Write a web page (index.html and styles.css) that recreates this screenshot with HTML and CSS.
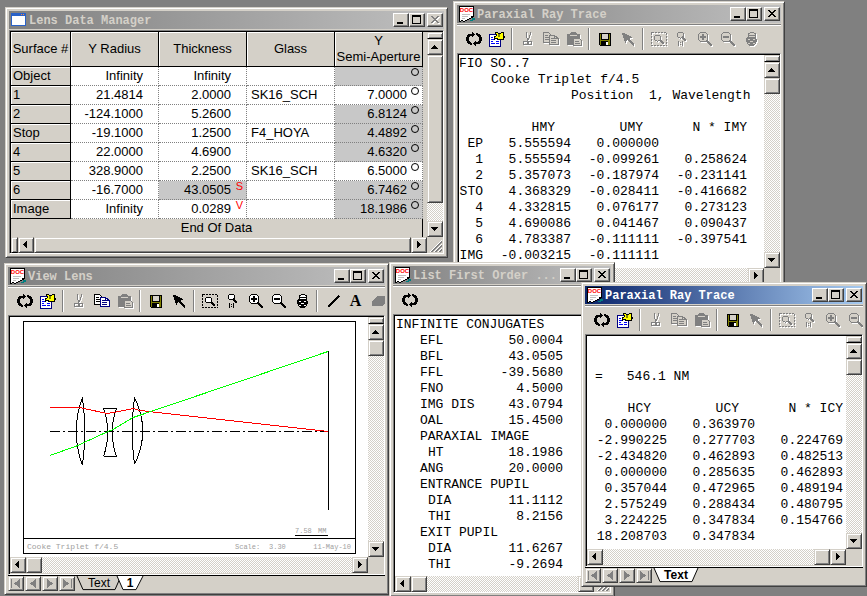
FILE: index.html
```html
<!DOCTYPE html>
<html lang="en">
<head>
<meta charset="utf-8">
<title>Lens Data Manager</title>
<link rel="stylesheet" href="styles.css">
</head>
<body>
<svg class="defs" aria-hidden="true">
  <symbol id="doc" viewBox="0 0 16 16"><path d="M0 0H15V11H14V12H12V13H10V14H8V15H6V16H4V15H2V16H0Z" fill="#000"/><path d="M1 1H14V10H12V12H10V13H8V14H6V15H4V14H2V15H1Z" fill="#fff"/><path d="M13 12h3v2h-2v1h-3v-1h2Z" fill="#008080"/><path d="M3 8.500h8M3 10.500h6M3 12.500h3" stroke="#c0c0c0"/><text x="7.500" y="6" text-anchor="middle" class="doc-label">DOC</text></symbol>
  <symbol id="app" viewBox="0 0 16 16"><path d="M0 1h15v13H0Z" fill="#2a62c8"/><path d="M1 4h13v9H1Z" fill="#fff"/><path d="M10 2h1v1h-1Zm2 0h1v1h-1Z" fill="#f84"/></symbol>
  <symbol id="refresh" viewBox="0 0 16 16"><path id="half" d="M4 3H6V1h1v1h1v1h1v1H8v1H7v1H6V5H4v1H3v4h1v1h1v1h1v2H4v-1H2v-1H1v-2H0V6h1V4h1V3Z" fill="currentColor"/><path d="M4 3H6V1h1v1h1v1h1v1H8v1H7v1H6V5H4v1H3v4h1v1h1v1h1v2H4v-1H2v-1H1v-2H0V6h1V4h1V3Z" transform="rotate(180 8 8)" fill="currentColor"/></symbol>
  <symbol id="props" viewBox="0 0 16 16"><path d="M.5 3.500h11v12H.5Z" fill="#fff" stroke="#000080"/><path d="M2 6.500h2M2 8.500h4M2 10.500h2M2 12.500h4M7 10.500h3M7 12.500h3" stroke="#00f"/><path d="M6 1h2l1 1h3l1-1h2l-1 2v2l2 1-2 1v1h-2l-1 1-1-1-2 1V7H7l-1 1H5V6l2-1V3Z" fill="#ff0" stroke="#000"/><path d="M9 3h2v3H9Z" fill="#808000"/></symbol>
  <symbol id="cut" viewBox="0 0 16 16"><g fill="none" stroke="currentColor"><path d="M6 1v3l1 3 1 3M10 1v3L9 7l-2 3"/><circle cx="5.500" cy="12" r="2"/><circle cx="10" cy="12" r="2"/></g></symbol>
  <symbol id="copy" viewBox="0 0 16 16"><g fill="var(--paper)"><path d="M.5 1.500h5l3 3v7h-8Z" stroke="var(--ink)"/><path d="M6.500 4.500h5l4 3v6h-9Z" stroke="var(--navy)"/></g><path d="M2 4.500h3M2 6.500h4M2 8.500h4" stroke="var(--ink)"/><path d="M8 7.500h3M8 9.500h5M8 11.500h5M11.500 5v2.500h4" fill="none" stroke="var(--navy)"/></symbol>
  <symbol id="paste" viewBox="0 0 16 16"><path d="M1 3h3l1-2h5l1 2h3v11H1Z" fill="currentColor"/><path d="M4 4.500h7" stroke="#d4d0c8"/><path d="M7.500 7.500h6l2 2v5h-8Z" fill="#d4d0c8" stroke="currentColor"/><path d="M9 10.500h4M9 12.500h5" stroke="currentColor"/></symbol>
  <symbol id="save" viewBox="0 0 16 16"><path d="M2 2h12v13H3l-1-1Z" fill="#000"/><path d="M3 3h1v6h8V3h1v11h-2v-4H4v4H3Z" fill="#808000"/><path d="M5 3h6v5H5Z" fill="#d4d0c8"/><path d="M9 11h2v3H9Z" fill="#fff"/></symbol>
  <symbol id="arrow" viewBox="0 0 16 16"><path d="M2 2h2l8 4v1h-2l-1 1 5 5v2h-1L7 9 6 10v2H5Z" fill="currentColor"/></symbol>
  <symbol id="zoombox" viewBox="0 0 16 16"><path d="M.5 1.500h15v13H.5Z" fill="none" stroke="currentColor" stroke-dasharray="2 1"/><circle cx="6.500" cy="7" r="3" fill="var(--paper)" stroke="currentColor"/><path d="M9 9l4 4" stroke="currentColor" stroke-width="2"/></symbol>
  <symbol id="zoomone" viewBox="0 0 16 16"><circle cx="6.500" cy="4" r="3" fill="var(--paper)" stroke="currentColor"/><path d="M8 6l4 4" stroke="currentColor" stroke-width="2"/><path d="M4.500 10v5M8.500 10v5M6 11.500h1M6 13.500h1" stroke="currentColor"/></symbol>
  <symbol id="zoomin" viewBox="0 0 16 16"><circle cx="6" cy="6" r="5" fill="var(--paper)" stroke="currentColor"/><path d="M6 3v6M3 6h6" stroke="currentColor" stroke-width="2"/><path d="M10 10l5 5" stroke="currentColor" stroke-width="2"/></symbol>
  <symbol id="zoomout" viewBox="0 0 16 16"><circle cx="6" cy="6" r="5" fill="var(--paper)" stroke="currentColor"/><path d="M3 6h6M10 10l5 5" stroke="currentColor" stroke-width="2"/></symbol>
  <symbol id="lock" viewBox="0 0 16 16"><path d="M5.500 7V3l2-1.500h3l2 1.500v4" fill="var(--paper)" stroke="currentColor"/><path d="M6 4.500h6" stroke="currentColor"/><path d="M4 6h9l1 3-1 4-3 2H7l-3-2-1-4Z" fill="currentColor"/><path d="M5 8h2v1H5Zm5 0h2v1h-2ZM7 10h3v1H7ZM5 12h2v1H5Zm5 0h2v1h-2Z" fill="var(--paper)"/></symbol>
  <symbol id="line" viewBox="0 0 16 16"><path d="M3 14L14 3" stroke="currentColor" stroke-width="2"/></symbol>
  <symbol id="eraser" viewBox="0 0 16 16"><path d="M6 3h10v5l-5 5H1V9Z" fill="currentColor"/></symbol>
  <symbol id="min" viewBox="0 0 12 10"><path d="M2 7h6v2H2Z" fill="currentColor"/></symbol>
  <symbol id="max" viewBox="0 0 12 10"><path d="M1 0h9v9H1ZM2 2v6h7V2Z" fill="currentColor" fill-rule="evenodd"/></symbol>
  <symbol id="close" viewBox="0 0 12 10"><path d="M2 1h2v1h1v1h2V2h1V1h2v1H9v1H8v1H7v1h1v1h1v1h1v1H8V7H7V6H5v1H4v1H2V7h1V6h1V5h1V4H4V3H3V2H2Z" fill="currentColor"/></symbol>
  <symbol id="up" viewBox="0 0 12 12"><path d="M5 4h1v1h1v1h1v1h1v1H2V7h1V6h1V5h1Z" fill="#000"/></symbol>
  <symbol id="down" viewBox="0 0 12 12"><path d="M2 4h7v1H8v1H7v1H6v1H5V7H4V6H3V5H2Z" fill="#000"/></symbol>
  <symbol id="left" viewBox="0 0 12 12"><path d="M7 2v7H6V8H5V7H4V6H3V5h1V4h1V3h1V2Z" fill="#000"/></symbol>
  <symbol id="right" viewBox="0 0 12 12"><path d="M4 2v7h1V8h1V7h1V6h1V5H7V4H6V3H5V2Z" fill="#000"/></symbol>
  <symbol id="first" viewBox="0 0 14 14"><path d="M2 2h1v10H2ZM11 2v10L5 7Z" fill="#808080"/></symbol>
  <symbol id="prev" viewBox="0 0 14 14"><path d="M10 2v10L4 7Z" fill="#808080"/></symbol>
  <symbol id="next" viewBox="0 0 14 14"><path d="M4 2v10l6-5Z" fill="#808080"/></symbol>
  <symbol id="last" viewBox="0 0 14 14"><path d="M11 2h1v10h-1ZM3 2v10l6-5Z" fill="#808080"/></symbol>
  <symbol id="grip" viewBox="0 0 16 16"><path d="M3 15L15 3M7 15l8-8M11 15l4-4" stroke="#fff"/><path d="M4 15L15 4M5 15L15 5M8 15l7-7M9 15l6-6M12 15l3-3M13 15l2-2" stroke="#808080"/></symbol>
</svg>

<main class="desktop">

<section class="window ray-back" aria-label="Paraxial Ray Trace, position 1">
  <header class="title"><svg class="ticon"><use href="#doc"/></svg><h2>Paraxial Ray Trace</h2>
    <button class="cap" aria-label="Minimize"><svg><use href="#min"/></svg></button><button class="cap" aria-label="Maximize"><svg><use href="#max"/></svg></button><button class="cap close" aria-label="Close"><svg><use href="#close"/></svg></button></header>
  <div class="toolbar">
    <button class="tool" aria-label="Refresh"><svg><use href="#refresh"/></svg></button><button class="tool" aria-label="Properties"><svg><use href="#props"/></svg></button><i class="sep"></i>
    <button class="tool" disabled aria-label="Cut"><svg><use href="#cut"/></svg></button><button class="tool" disabled aria-label="Copy"><svg><use href="#copy"/></svg></button><button class="tool" disabled aria-label="Paste"><svg><use href="#paste"/></svg></button><i class="sep"></i>
    <button class="tool" aria-label="Save"><svg><use href="#save"/></svg></button><button class="tool" disabled aria-label="Select"><svg><use href="#arrow"/></svg></button><i class="sep"></i>
    <button class="tool" disabled aria-label="Zoom area"><svg><use href="#zoombox"/></svg></button><button class="tool" disabled aria-label="Actual size"><svg><use href="#zoomone"/></svg></button><button class="tool" disabled aria-label="Zoom in"><svg><use href="#zoomin"/></svg></button><button class="tool" disabled aria-label="Zoom out"><svg><use href="#zoomout"/></svg></button><button class="tool" disabled aria-label="Lock"><svg><use href="#lock"/></svg></button>
  </div>
  <div class="pane">
    <div class="view mono">
      <p>FIO SO..7</p>
      <p class="in-4">Cooke Triplet f/4.5</p>
      <p class="in-14">Position&nbsp; 1, Wavelength</p>
      <table class="trace gap-top">
        <colgroup><col class="c-id"><col class="c-num"><col class="c-num"><col class="c-num"></colgroup>
        <tr><th></th><th class="mid">HMY</th><th class="mid">UMY</th><th>N * IMY</th></tr>
        <tr><td>EP</td><td>5.555594</td><td>0.000000</td><td></td></tr>
        <tr><td>1</td><td>5.555594</td><td>-0.099261</td><td>0.258624</td></tr>
        <tr><td>2</td><td>5.357073</td><td>-0.187974</td><td>-0.231141</td></tr>
        <tr><td>STO</td><td>4.368329</td><td>-0.028411</td><td>-0.416682</td></tr>
        <tr><td>4</td><td>4.332815</td><td>0.076177</td><td>0.273123</td></tr>
        <tr><td>5</td><td>4.690086</td><td>0.041467</td><td>0.090437</td></tr>
        <tr><td>6</td><td>4.783387</td><td>-0.111111</td><td>-0.397541</td></tr>
        <tr><td>IMG</td><td>-0.003215</td><td>-0.111111</td><td></td></tr>
      </table>
    </div>
    <div class="vscroll"><i class="split"></i><button class="arr" aria-label="Up"><svg><use href="#up"/></svg></button><i class="thumb"></i><i class="track"></i><button class="arr" aria-label="Down"><svg><use href="#down"/></svg></button></div>
    <div class="hscroll"><button class="arr" aria-label="Left"><svg><use href="#left"/></svg></button><i class="thumb"></i><i class="track"></i><button class="arr" aria-label="Right"><svg><use href="#right"/></svg></button></div>
  </div>
</section>

<section class="window data" aria-label="Lens Data Manager">
  <header class="title"><svg class="ticon"><use href="#app"/></svg><h2>Lens Data Manager</h2>
    <button class="cap" aria-label="Minimize"><svg><use href="#min"/></svg></button><button class="cap" aria-label="Maximize"><svg><use href="#max"/></svg></button><button class="cap close" disabled aria-label="Close"><svg><use href="#close"/></svg></button></header>
  <div class="pane">
    <div class="sheet-area">
      <table class="sheet">
        <colgroup><col class="s-id"><col><col><col><col></colgroup>
        <thead><tr><th>Surface #</th><th>Y Radius</th><th>Thickness</th><th>Glass</th><th>Y<br>Semi-Aperture</th></tr></thead>
        <tbody>
        <tr><th>Object</th><td>Infinity</td><td>Infinity</td><td></td><td class="shade"><b class="ring"></b></td></tr>
        <tr><th>1</th><td>21.4814</td><td>2.0000</td><td>SK16_SCH</td><td>7.0000<b class="ring"></b></td></tr>
        <tr><th>2</th><td>-124.1000</td><td>5.2600</td><td></td><td class="shade">6.8124<b class="ring"></b></td></tr>
        <tr><th>Stop</th><td>-19.1000</td><td>1.2500</td><td>F4_HOYA</td><td class="shade">4.4892<b class="ring"></b></td></tr>
        <tr><th>4</th><td>22.0000</td><td>4.6900</td><td></td><td class="shade">4.6320<b class="ring"></b></td></tr>
        <tr><th>5</th><td>328.9000</td><td>2.2500</td><td>SK16_SCH</td><td>6.5000<b class="ring"></b></td></tr>
        <tr><th>6</th><td>-16.7000</td><td class="shade">43.0505<b class="mark">S</b></td><td></td><td class="shade">6.7462<b class="ring"></b></td></tr>
        <tr><th>Image</th><td>Infinity</td><td>0.0289<b class="mark">V</b></td><td></td><td class="shade">18.1986<b class="ring"></b></td></tr>
        </tbody>
      </table>
      <p class="end">End Of Data</p>
    </div>
    <div class="vscroll"><i class="split"></i><button class="arr" aria-label="Up"><svg><use href="#up"/></svg></button><i class="thumb long"></i><i class="track"></i><button class="arr" aria-label="Down"><svg><use href="#down"/></svg></button></div>
    <div class="hscroll"><i class="split"></i><button class="arr" aria-label="Left"><svg><use href="#left"/></svg></button><i class="thumb full"></i><button class="arr" aria-label="Right"><svg><use href="#right"/></svg></button></div>
    <svg class="grip"><use href="#grip"/></svg>
  </div>
</section>

<section class="window lens" aria-label="View Lens">
  <header class="title"><svg class="ticon"><use href="#doc"/></svg><h2>View Lens</h2>
    <button class="cap" aria-label="Minimize"><svg><use href="#min"/></svg></button><button class="cap" aria-label="Maximize"><svg><use href="#max"/></svg></button><button class="cap close" aria-label="Close"><svg><use href="#close"/></svg></button></header>
  <div class="toolbar">
    <button class="tool" aria-label="Refresh"><svg><use href="#refresh"/></svg></button><button class="tool" aria-label="Properties"><svg><use href="#props"/></svg></button><i class="sep"></i>
    <button class="tool" disabled aria-label="Cut"><svg><use href="#cut"/></svg></button><button class="tool" aria-label="Copy"><svg><use href="#copy"/></svg></button><button class="tool" disabled aria-label="Paste"><svg><use href="#paste"/></svg></button><i class="sep"></i>
    <button class="tool" aria-label="Save"><svg><use href="#save"/></svg></button><button class="tool" aria-label="Select"><svg><use href="#arrow"/></svg></button><i class="sep"></i>
    <button class="tool" aria-label="Zoom area"><svg><use href="#zoombox"/></svg></button><button class="tool" aria-label="Actual size"><svg><use href="#zoomone"/></svg></button><button class="tool" aria-label="Zoom in"><svg><use href="#zoomin"/></svg></button><button class="tool" aria-label="Zoom out"><svg><use href="#zoomout"/></svg></button><button class="tool" aria-label="Lock"><svg><use href="#lock"/></svg></button><i class="sep"></i>
    <button class="tool" aria-label="Line"><svg><use href="#line"/></svg></button><button class="tool letter">A</button><button class="tool eraser" aria-label="Erase"><svg><use href="#eraser"/></svg></button>
  </div>
  <div class="pane">
    <div class="view">
      <svg class="drawing" viewBox="10 317 358 240" role="img" aria-label="Cooke triplet layout">
        <g fill="none" stroke="#000" shape-rendering="crispEdges">
          <path d="M23.500 321.500h332v232h-332ZM23 538.500h332M328.500 351v159M295 535.500h33"/>
          <path d="M50 431.500H328" stroke-dasharray="10 3 2 3"/>
          <path d="M82.500 397.500Q70 431 82.500 465.500M82.500 397.500Q87 431 82.500 465.500"/>
          <path d="M103.500 408.500h13M103.500 456.500h13M103.500 408.500Q112 432 103.500 456.500M116.500 408.500Q108 432 116.500 456.500"/>
          <path d="M134.500 397.500Q130 431 134.500 464.500M134.500 397.500Q151 431 134.500 464.500"/>
          <path stroke="#f00" d="M50 407.500H80L84 408.500 107 413.500 114 412.500 133 408.500 140 410.500 328 431.500"/>
          <path stroke="#0f0" d="M50 455.500L78 445.500 84 442.500 108 431.500 113 429.500 133 417.500 142 414.500 328 351.500"/>
        </g>
        <g class="note"><text class="name" x="27" y="549">Cooke Triplet f/4.5</text><text x="235" y="549">Scale:</text><text x="269" y="549">3.30</text><text x="351" y="549" text-anchor="end">11-May-10</text><text x="295" y="533">7.58</text><text x="318" y="533">MM</text></g>
      </svg>
    </div>
    <div class="vscroll"><i class="split"></i><button class="arr" aria-label="Up"><svg><use href="#up"/></svg></button><i class="thumb"></i><i class="track"></i><button class="arr" aria-label="Down"><svg><use href="#down"/></svg></button></div>
    <div class="hscroll"><button class="arr" aria-label="Left"><svg><use href="#left"/></svg></button><i class="thumb"></i><i class="track"></i><button class="arr" aria-label="Right"><svg><use href="#right"/></svg></button></div>
  </div>
  <nav class="tabs">
    <button class="nav" aria-label="First"><svg><use href="#first"/></svg></button><button class="nav" aria-label="Previous"><svg><use href="#prev"/></svg></button><button class="nav" aria-label="Next"><svg><use href="#next"/></svg></button><button class="nav" aria-label="Last"><svg><use href="#last"/></svg></button>
    <button class="tab"><svg viewBox="0 0 44 16" preserveAspectRatio="none"><path d="M0 0L6 14.500H38L44 0" fill="#d4d0c8" stroke="#000"/></svg><span>Text</span></button><button class="tab short on"><svg viewBox="0 0 26 16" preserveAspectRatio="none"><path d="M0 0L6 14.500H19L26 0" fill="#fff" stroke="#000"/></svg><span>1</span></button>
  </nav>
</section>

<section class="window order" aria-label="List First Order">
  <header class="title"><svg class="ticon"><use href="#doc"/></svg><h2>List First Order ...</h2>
    <button class="cap" aria-label="Minimize"><svg><use href="#min"/></svg></button><button class="cap" aria-label="Maximize"><svg><use href="#max"/></svg></button><button class="cap close" aria-label="Close"><svg><use href="#close"/></svg></button></header>
  <div class="toolbar"><button class="tool" aria-label="Refresh"><svg><use href="#refresh"/></svg></button></div>
  <div class="pane">
    <div class="view mono inset">
      <table class="props">
        <tr><th colspan="2">INFINITE CONJUGATES</th></tr>
        <tr><td>EFL</td><td>50.0004</td></tr>
        <tr><td>BFL</td><td>43.0505</td></tr>
        <tr><td>FFL</td><td>-39.5680</td></tr>
        <tr><td>FNO</td><td>4.5000</td></tr>
        <tr><td>IMG DIS</td><td>43.0794</td></tr>
        <tr><td>OAL</td><td>15.4500</td></tr>
        <tr><td colspan="2">PARAXIAL IMAGE</td></tr>
        <tr class="sub"><td>HT</td><td>18.1986</td></tr>
        <tr><td>ANG</td><td>20.0000</td></tr>
        <tr><td colspan="2">ENTRANCE PUPIL</td></tr>
        <tr class="sub"><td>DIA</td><td>11.1112</td></tr>
        <tr class="sub"><td>THI</td><td>8.2156</td></tr>
        <tr><td colspan="2">EXIT PUPIL</td></tr>
        <tr class="sub"><td>DIA</td><td>11.6267</td></tr>
        <tr class="sub"><td>THI</td><td>-9.2694</td></tr>
      </table>
    </div>
    <div class="vscroll"><i class="split"></i><button class="arr" aria-label="Up"><svg><use href="#up"/></svg></button><i class="thumb"></i><i class="track"></i><button class="arr" aria-label="Down"><svg><use href="#down"/></svg></button></div>
    <div class="hscroll"><button class="arr" aria-label="Left"><svg><use href="#left"/></svg></button><i class="thumb"></i><i class="track"></i><button class="arr" aria-label="Right"><svg><use href="#right"/></svg></button></div>
    <svg class="grip"><use href="#grip"/></svg>
  </div>
</section>

<section class="window ray-front active" aria-label="Paraxial Ray Trace, wavelength">
  <header class="title"><svg class="ticon"><use href="#doc"/></svg><h2>Paraxial Ray Trace</h2>
    <button class="cap" aria-label="Minimize"><svg><use href="#min"/></svg></button><button class="cap" aria-label="Maximize"><svg><use href="#max"/></svg></button><button class="cap close" aria-label="Close"><svg><use href="#close"/></svg></button></header>
  <div class="toolbar">
    <button class="tool" aria-label="Refresh"><svg><use href="#refresh"/></svg></button><button class="tool" aria-label="Properties"><svg><use href="#props"/></svg></button><i class="sep"></i>
    <button class="tool" disabled aria-label="Cut"><svg><use href="#cut"/></svg></button><button class="tool" disabled aria-label="Copy"><svg><use href="#copy"/></svg></button><button class="tool" disabled aria-label="Paste"><svg><use href="#paste"/></svg></button><i class="sep"></i>
    <button class="tool" aria-label="Save"><svg><use href="#save"/></svg></button><button class="tool" disabled aria-label="Select"><svg><use href="#arrow"/></svg></button><i class="sep"></i>
    <button class="tool" disabled aria-label="Zoom area"><svg><use href="#zoombox"/></svg></button><button class="tool" disabled aria-label="Actual size"><svg><use href="#zoomone"/></svg></button><button class="tool" disabled aria-label="Zoom in"><svg><use href="#zoomin"/></svg></button><button class="tool" disabled aria-label="Zoom out"><svg><use href="#zoomout"/></svg></button>
  </div>
  <div class="pane">
    <div class="view mono">
      <p class="wave"><span>=</span><span>546.1 NM</span></p>
      <table class="trace gap-top">
        <colgroup><col class="c-first"><col class="c-num"><col class="c-num"></colgroup>
        <tr><th class="mid">HCY</th><th class="mid">UCY</th><th>N * ICY</th></tr>
        <tr><td>0.000000</td><td>0.363970</td><td></td></tr>
        <tr><td>-2.990225</td><td>0.277703</td><td>0.224769</td></tr>
        <tr><td>-2.434820</td><td>0.462893</td><td>0.482513</td></tr>
        <tr><td>0.000000</td><td>0.285635</td><td>0.462893</td></tr>
        <tr><td>0.357044</td><td>0.472965</td><td>0.489194</td></tr>
        <tr><td>2.575249</td><td>0.288434</td><td>0.480795</td></tr>
        <tr><td>3.224225</td><td>0.347834</td><td>0.154766</td></tr>
        <tr><td>18.208703</td><td>0.347834</td><td></td></tr>
      </table>
    </div>
    <div class="vscroll"><i class="split"></i><button class="arr" aria-label="Up"><svg><use href="#up"/></svg></button><i class="thumb"></i><i class="track"></i><button class="arr" aria-label="Down"><svg><use href="#down"/></svg></button></div>
    <div class="hscroll"><button class="arr" aria-label="Left"><svg><use href="#left"/></svg></button><i class="track"></i><i class="thumb"></i><button class="arr" aria-label="Right"><svg><use href="#right"/></svg></button></div>
  </div>
  <nav class="tabs">
    <button class="nav" aria-label="First"><svg><use href="#first"/></svg></button><button class="nav" aria-label="Previous"><svg><use href="#prev"/></svg></button><button class="nav" aria-label="Next"><svg><use href="#next"/></svg></button><button class="nav" aria-label="Last"><svg><use href="#last"/></svg></button>
    <button class="tab on"><svg viewBox="0 0 44 16" preserveAspectRatio="none"><path d="M0 0L6 14.500H38L44 0" fill="#fff" stroke="#000"/></svg><span>Text</span></button>
  </nav>
</section>

</main>
</body>
</html>
```
FILE: styles.css
```css
:root {
  --face: #d4d0c8;
  --ink: #000;
  --paper: #fff;
  --navy: #000080;
}
* { box-sizing: border-box; }
html, body { height: 100%; margin: 0; }
body {
  background: #808080;
  color: #000;
  font: 13px/16px "Liberation Sans", Arial, sans-serif;
}
p, h2 { margin: 0; }
button { margin: 0; padding: 0; border: 0; background: none; font: inherit; color: inherit; }
svg { display: block; shape-rendering: crispEdges; }
table { border-collapse: separate; border-spacing: 0; table-layout: fixed; }
th, td { padding: 0; font-weight: normal; }
.defs { position: absolute; width: 0; height: 0; }

/* Desktop and windows */
.desktop { position: relative; height: 100%; overflow: hidden; }
.window {
  position: absolute;
  display: flex;
  flex-direction: column;
  padding: 3px;
  background: var(--face);
  border: 1px solid;
  border-color: var(--face) #404040 #404040 var(--face);
  box-shadow: inset 1px 1px #fff, inset -1px -1px #808080;
}
.data { left: 5px; top: 7px; width: 443px; height: 251px; }
.ray-back { left: 453px; top: 1px; width: 332px; height: 288px; }
.lens { left: 4px; top: 263px; width: 385px; height: 332px; }
.order { left: 389px; top: 262px; width: 226px; height: 335px; }
.ray-front { left: 581px; top: 282px; width: 286px; height: 305px; }

/* Title bar */
.title {
  flex: none;
  display: flex;
  align-items: center;
  height: 18px;
  padding: 0 1px 0 2px;
  background: linear-gradient(90deg, #808080, #c0c0c0);
  color: var(--face);
}
.active .title { background: linear-gradient(90deg, #0a246a, #a6caf0); color: #fff; }
.title h2 {
  flex: 1;
  padding: 1px 0 0 2px;
  font: bold 12px/16px "Liberation Mono", "Courier New", monospace;
  white-space: nowrap;
  overflow: hidden;
}
.ticon { width: 16px; height: 16px; }
.doc-label { font: bold 6px "Liberation Sans", Arial, sans-serif; fill: #f00; }
.cap {
  flex: none;
  width: 16px;
  height: 14px;
  padding: 1px;
  background: var(--face);
  color: #000;
  border: 1px solid;
  border-color: #fff #404040 #404040 #fff;
  box-shadow: inset -1px -1px #808080;
}
.cap svg { width: 12px; height: 10px; }
.cap.close { margin-left: 2px; }
.cap:disabled { color: #808080; }
.cap:disabled svg { filter: drop-shadow(1px 1px 0 #fff); }

/* Toolbar */
.toolbar {
  flex: none;
  display: flex;
  align-items: center;
  height: 30px;
  padding: 2px 0 0 5px;
  background: linear-gradient(#808080, #808080) 0 1px / 100% 1px no-repeat, linear-gradient(#fff, #fff) 0 2px / 100% 1px no-repeat;
  overflow: hidden;
}
.tool {
  flex: none;
  display: flex;
  align-items: center;
  justify-content: center;
  width: 23px;
  height: 22px;
}
.tool svg { width: 16px; height: 16px; }
.tool:disabled {
  --ink: #808080;
  --navy: #808080;
  --paper: #d4d0c8;
  color: #808080;
}
.tool:disabled svg { filter: drop-shadow(1px 1px 0 #fff); }
.tool.letter { font: bold 16px/16px "Liberation Serif", "Times New Roman", serif; }
.tool.eraser { color: #808080; }
.sep { flex: none; width: 2px; height: 22px; margin: 0 3px; background: #808080; border-right: 1px solid #fff; }

/* Pane with scroll bars */
.pane {
  flex: 1;
  min-height: 0;
  display: grid;
  grid-template: minmax(0, 1fr) 16px / minmax(0, 1fr) 16px;
  border: 1px solid;
  border-color: #808080 #fff #fff #808080;
  box-shadow: inset 1px 1px #000;
  padding: 1px 0 0 1px;
}
.data .pane { margin-top: 1px; }
.lens .pane, .ray-front .pane { padding-bottom: 1px; }
.view { background: #fff; overflow: hidden; }
.vscroll, .hscroll { display: flex; background: var(--face); min-width: 0; min-height: 0; }
.vscroll { flex-direction: column; }
.arr, .thumb, .split, .nav {
  flex: none;
  background: var(--face);
  border: 1px solid;
  border-color: var(--face) #404040 #404040 var(--face);
  box-shadow: inset 1px 1px #fff, inset -1px -1px #808080;
}
.arr { width: 16px; height: 16px; padding: 1px; }
.arr svg { width: 12px; height: 12px; }
.thumb { width: 16px; height: 16px; }
.thumb.long { height: 148px; }
.thumb.full { flex: 1; }
.split { width: 16px; height: 7px; border-bottom-color: #000; }
.hscroll .split { width: 7px; height: 16px; }
.track { flex: 1; background: repeating-conic-gradient(#fff 0 25%, #d4d0c8 0 50%) 0 0 / 2px 2px; }
.grip { width: 16px; height: 16px; }

/* Text listings */
.mono { padding-top: 1px; font: 13px/16px "Liberation Mono", "Courier New", monospace; white-space: nowrap; }
.in-4 { padding-left: 32px; }
.in-14 { padding-left: 112px; }
.gap-top { margin-top: 16px; }
.trace { width: min-content; text-align: right; }
.trace tr { height: 16px; }
.trace th { text-align: right; }
.trace th.mid { padding-right: 16px; }
.c-id { width: 24px; }
.c-first { width: 80px; }
.c-num { width: 88px; }
.wave { display: flex; gap: 24px; padding: 32px 0 0 8px; }
.inset { padding-left: 1px; }
.props { width: 167px; }
.props tr { height: 16px; }
.props th { text-align: left; }
.props td { padding-left: 24px; }
.props td + td { padding-left: 0; text-align: right; }
.props .sub td:first-child { padding-left: 32px; }

/* Lens data sheet */
.sheet-area { overflow: hidden; }
.sheet { width: 412px; }
.sheet .s-id { width: 60px; }
.sheet th { background: var(--face); border: solid #000; border-width: 0 1px 1px 0; box-shadow: inset 1px 1px #fff; }
.sheet thead th { height: 35px; line-height: 16px; white-space: nowrap; }
.sheet tbody th { text-align: left; padding-left: 2px; }
.sheet tbody tr { height: 19px; }
.sheet td {
  position: relative;
  height: 19px;
  padding-right: 15px;
  background: #fff;
  border: dotted #808080;
  border-width: 0 1px 1px 0;
  text-align: right;
}
.sheet td:nth-child(4) { padding: 0 0 0 4px; text-align: left; }
.sheet td.shade { background: #c8c8c8; }
.ring { position: absolute; top: 1px; right: 3px; width: 8px; height: 8px; border: 1px solid #000; border-radius: 50%; }
.mark { position: absolute; top: 0; right: 3px; color: #f00; font: 11px/11px "Liberation Sans", Arial, sans-serif; }
.end { width: 412px; height: 18px; padding-top: 1px; border-right: 1px solid #000; text-align: center; }

/* Lens drawing */
.drawing { width: 100%; height: 100%; }
.note { font: 7px "Liberation Mono", "Courier New", monospace; fill: #a0a0a0; }
.note .name { font-size: 8px; }

/* Sheet tabs */
.tabs { flex: none; display: flex; height: 16px; border-top: 1px solid #000; }
.nav { width: 16px; height: 15px; margin-right: 1px; padding: 0; }
.nav svg { width: 14px; height: 13px; }
.tab { position: relative; width: 44px; height: 15px; margin-left: 1px; font-size: 12px; line-height: 15px; }
.tab.short { width: 26px; margin-left: -4px; }
.tab svg { position: absolute; inset: 0; width: 100%; height: 15px; overflow: visible; shape-rendering: auto; }
.tab span { position: relative; }
.tab.on { font-weight: bold; }
```
